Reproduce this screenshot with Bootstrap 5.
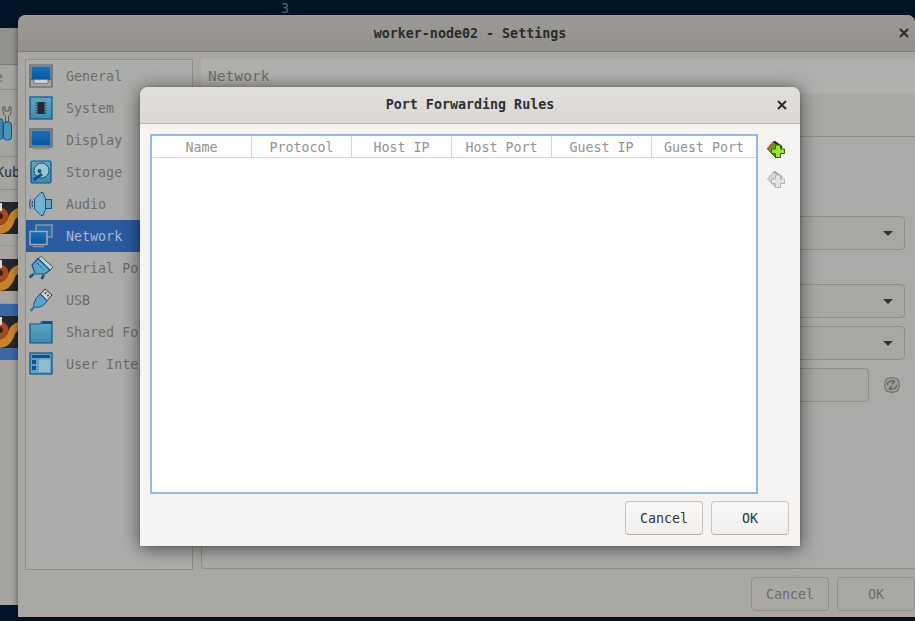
<!DOCTYPE html>
<html lang="en">
<head>
    <meta charset="UTF-8">
    <meta name="viewport" content="width=device-width, initial-scale=1">
    <title>Port Forwarding Rules</title>

    <link href="https://cdn.jsdelivr.net/npm/bootstrap@5.3.2/dist/css/bootstrap.min.css" rel="stylesheet">

    <style>
        html, body {
            height: 100%;
            margin: 0;
            overflow: hidden;
        }
        body {
            background-color: #011426;
            font-family: "DejaVu Sans Mono", "Liberation Mono", monospace;
            font-size: 13.33px;
            line-height: 16px;
        }
        .desk-num {
            position: absolute;
            left: 281px;
            top: 1px;
            color: #56687a;
        }

        /* window behind on the left */
        .back-win {
            position: absolute;
            left: 0;
            top: 28px;
            width: 18px;
            height: 577px;
            background-color: #a5a4a1;
            overflow: hidden;
            color: #2b2b2b;
        }
        .back-head { height: 37px; background-color: #94928e; border-bottom: 1px solid #7d7b77; }
        .back-menu { height: 25px; border-bottom: 1px solid #8d8b87; color: #666; padding-top: 5px; text-indent: -5px; }
        .back-tools { height: 67px; border-bottom: 1px solid #8d8b87; }
        .back-kub { height: 33px; border-bottom: 1px solid #8d8b87; padding-top: 8px; text-indent: -4px; white-space: nowrap; }
        .back-row { height: 56px; border-bottom: 1px solid #999794; }
        .back-row.is-tall { height: 58px; }
        .back-row.is-current { background-color: #3a66a5; border-bottom: 0; }

        /* dimmed settings window */
        .settings-win {
            position: absolute;
            left: 18px;
            top: 15px;
            width: 897px;
            height: 602px;
            background-color: #a9a8a5;
            border-radius: 8px 8px 0 0;
            box-shadow: 0 0 6px rgba(0, 0, 0, .55);
            color: #6c6c6b;
        }
        .settings-head {
            height: 37px;
            padding: 2px 0 0 7px;
            background: linear-gradient(#9c9a96, #94918d);
            border-bottom: 1px solid #7f7c78;
            border-radius: 8px 8px 0 0;
            color: #2a2b2c;
            font-weight: 700;
        }
        .win-x {
            position: absolute;
            right: 4px;
            top: 11px;
            width: 14px;
            height: 14px;
        }
        .settings-body {
            padding: 7px 0 0 7px;
            gap: 8px;
        }
        .side-list {
            width: 168px;
            height: 511px;
            border: 1px solid #8f8e8a;
            background-color: #acacab;
            flex: none;
        }
        .side-item {
            height: 32px;
            gap: 13px;
            padding-left: 3px;
            white-space: nowrap;
            overflow: hidden;
        }
        .side-item svg { flex: none; width: 24px; height: 24px; }
        .side-item span { padding-top: 2px; }
        .side-item.is-current { background-color: #2a5b9f; color: #a9b9d2; }
        .side-main { flex: 1; min-width: 0; }
        .page-title {
            height: 35px;
            background-color: #afafae;
            padding: 9px 0 0 7px;
            font-size: 14.6px;
        }
        .page-panel {
            margin-top: 42px;
            height: 433px;
            border: 1px solid #8f8e8a;
            border-right: 0;
            border-radius: 4px 0 0 4px;
            background-color: #aaa9a7;
            padding: 79px 10px 0 0;
        }
        .fake-select, .fake-input {
            height: 34px;
            border: 1px solid #908e89;
            border-radius: 4px;
            background-color: #a8a7a3;
            margin-left: 330px;
        }
        .fake-select { position: relative; }
        .fake-select::after {
            content: "";
            position: absolute;
            right: 11px;
            top: 14px;
            border-left: 5px solid transparent;
            border-right: 5px solid transparent;
            border-top: 5px solid #333;
        }
        .gap-big { margin-top: 34px; }
        .gap-small { margin-top: 8px; }
        .fake-input { margin-right: 36px; }
        .refresh-row { position: relative; }
        .refresh-row svg { position: absolute; right: 4px; top: 8px; }
        .settings-foot {
            padding: 8px 0 0 0;
            gap: 8px;
        }
        .dim-btn, .dlg-btn {
            width: 78px;
            height: 34px;
            padding: 2px 0 0;
            font: inherit;
            border-radius: 4px;
        }
        .dim-btn {
            border: 1px solid #918f8b;
            background-color: #a9a8a5;
            color: #6c6c6b;
        }

        /* modal on top */
        .rules-dlg {
            position: absolute;
            left: 140px;
            top: 87px;
            width: 660px;
            height: 459px;
            background-color: #f5f4f2;
            border-radius: 8px 8px 0 0;
            box-shadow: 0 2px 18px rgba(0, 0, 0, .6), 0 0 1px rgba(0, 0, 0, .8);
            color: #2e3436;
        }
        .rules-dlg > .win-x { right: 11px; }
        .dlg-head {
            height: 37px;
            background: linear-gradient(#e1dedb, #dcd9d5);
            border-bottom: 1px solid #bdb8b1;
            border-radius: 8px 8px 0 0;
            font-weight: 700;
            color: #2e3132;
        }
        .dlg-body { padding: 10px 0 0 10px; }
        .rules-box {
            width: 608px;
            height: 360px;
            border: 2px solid #8fbbea;
            background-color: #fff;
            flex: none;
        }
        .rules-tbl {
            width: 100%;
            table-layout: fixed;
            margin: 0;
            border-collapse: separate;
            border-spacing: 0;
        }
        .rules-tbl th {
            height: 22px;
            padding: 2px 0 0;
            font-weight: 400;
            text-align: center;
            color: #929292;
            border: 0;
            border-right: 1px solid #d5d5d4;
            border-bottom: 1px solid #d5d5d4;
            vertical-align: middle;
        }
        .rules-tbl th:last-child { border-right: 0; }
        .tool-col {
            width: 36px;
            padding: 7px 0 0 9px;
            gap: 12px;
        }
        .dlg-foot {
            padding: 7px 11px 0 0;
            gap: 8px;
        }
        .dlg-btn {
            border: 1px solid #c9c5bf;
            border-bottom-color: #b3aea6;
            background: linear-gradient(#f8f7f6, #f2f1ef);
            color: #2e3436;
        }
    </style>
</head>
<body>

<div class="desk-num">3</div>

<!-- window behind -->
<div class="back-win">
    <svg width="0" height="0" class="d-block">
        <defs>
            <g id="vm-thumb">
                <rect width="18" height="32" fill="#24262c"/>
                <path d="M0 23 Q6 22 8 16 Q11 8 18 6 V15 Q15 16 14 21 Q10 31 0 32 Z" fill="#c4822c"/>
                <circle cx="0" cy="14" r="8.500" fill="#a8481a"/>
                <circle cx="0" cy="14" r="3" fill="#3a1f14"/>
                <rect x="0" y="1" width="2" height="8" fill="#d8d8d8"/>
            </g>
        </defs>
    </svg>
    <div class="back-head"></div>
    <div class="back-menu">e</div>
    <div class="back-tools d-flex align-items-center">
        <svg width="18" height="36" viewBox="0 0 18 36">
            <rect x="-4" y="14" width="7" height="20" rx="2" fill="#3f86a8" stroke="#17508a"/>
            <path d="M3 2 v5 q0 3 2.500 4 v6 h3 v-6 q2.500 -1 2.500 -4 v-5 l-2 0 v4 h-4 v-4 Z" fill="#a5a4a1" stroke="#555"/>
            <rect x="3.500" y="17" width="8" height="18" rx="3" fill="#4a93b5" stroke="#17508a"/>
        </svg>
    </div>
    <div class="back-kub">Kub</div>
    <div class="back-row d-flex align-items-center">
        <svg width="18" height="32" viewBox="0 0 18 32"><use href="#vm-thumb"/></svg>
    </div>
    <div class="back-row is-tall d-flex align-items-center">
        <svg width="18" height="32" viewBox="0 0 18 32"><use href="#vm-thumb"/></svg>
    </div>
    <div class="back-row is-current d-flex align-items-center">
        <svg width="18" height="32" viewBox="0 0 18 32"><use href="#vm-thumb"/></svg>
    </div>
</div>

<!-- settings window -->
<div class="settings-win d-flex flex-column">
    <div class="settings-head d-flex align-items-center justify-content-center">worker-node02 - Settings</div>
    <svg class="win-x" viewBox="0 0 14 14"><path d="M3 3 L11 11 M11 3 L3 11" stroke="#2b2c2d" stroke-width="2"/></svg>

    <div class="settings-body d-flex">
        <div class="side-list">
            <svg width="0" height="0" class="d-block">
                <defs>
                    <linearGradient id="scr" x1="0" y1="0" x2="0" y2="1"><stop offset="0" stop-color="#1c6fb0"/><stop offset="1" stop-color="#0659a3"/></linearGradient>
                    <linearGradient id="tl" x1="0" y1="0" x2="0" y2="1"><stop offset="0" stop-color="#5fa8c2"/><stop offset="1" stop-color="#3f8bae"/></linearGradient>
                </defs>
            </svg>
            <div class="side-item d-flex align-items-center">
                <svg viewBox="0 0 24 24"><path d="M1 1 H23 V23 H1 Z" fill="#a5a5a3" stroke="#5a5a5a" stroke-width="1.200"/><rect x="2.500" y="2.500" width="19" height="13" fill="url(#scr)"/><path d="M1.500 15.500 H5 V19 H19 V15.500 H22.500" fill="none" stroke="#5a5a5a"/><rect x="5.500" y="16" width="13" height="3" fill="#cfcfcd"/></svg>
                <span>General</span>
            </div>
            <div class="side-item d-flex align-items-center">
                <svg viewBox="0 0 24 24"><rect x="1" y="1" width="22" height="22" fill="url(#tl)" stroke="#14508e" stroke-width="1.200"/><path d="M6.500 7h11M6.500 9.500h11M6.500 12h11M6.500 14.500h11M6.500 17h11" stroke="#274b5e" stroke-width=".8"/><rect x="8.500" y="6" width="7" height="12" fill="#26292d"/></svg>
                <span>System</span>
            </div>
            <div class="side-item d-flex align-items-center">
                <svg viewBox="0 0 24 24"><rect x="1" y="1" width="22" height="18" fill="#a5a5a3" stroke="#5a5a5a" stroke-width="1.200"/><rect x="2.500" y="2.500" width="19" height="15" fill="url(#scr)"/><path d="M4 20.500h16" stroke="#8f8f8d" stroke-width="2"/></svg>
                <span>Display</span>
            </div>
            <div class="side-item d-flex align-items-center">
                <svg viewBox="0 0 24 24"><rect x="2" y="1" width="20" height="22" rx="1.500" fill="url(#tl)" stroke="#14508e" stroke-width="1.200"/><circle cx="12.500" cy="10.500" r="7.500" fill="#9cc4d0" stroke="#1d4f7a"/><circle cx="10.500" cy="11" r="2" fill="#1d4f7a"/><path d="M4.500 20 L13 14" stroke="#14508e" stroke-width="3"/></svg>
                <span>Storage</span>
            </div>
            <div class="side-item d-flex align-items-center">
                <svg viewBox="0 0 24 24"><path d="M3.500 9 Q2.500 12 3.500 15 M1.500 7 Q-.5 12 1.500 17" fill="none" stroke="#14508e"/><path d="M5.500 7 L12 .5 H14 L17 8 V16 L14 23.500 H12 L5.500 17 Z" fill="#74b3cb" stroke="#14508e"/><rect x="16.500" y="7.500" width="6" height="9" fill="#63a7c4" stroke="#14508e"/></svg>
                <span>Audio</span>
            </div>
            <div class="side-item is-current d-flex align-items-center">
                <svg viewBox="0 0 24 24"><rect x="7" y="1" width="16" height="12" fill="#2a6ca6" stroke="#8e98a5" stroke-width="1.400"/><path d="M18 13 v4 h-2" stroke="#8e98a5" fill="none"/><rect x="1" y="7.500" width="17" height="13" fill="url(#scr)" stroke="#a2acb8" stroke-width="1.400"/><path d="M4 22.500h11" stroke="#8e98a5" stroke-width="1.400"/></svg>
                <span>Network</span>
            </div>
            <div class="side-item d-flex align-items-center">
                <svg viewBox="0 0 24 24"><path d="M12 .5 L24 11 L21 14 L9 2.500 Z" fill="#d0d0ce" stroke="#555"/><path d="M9 2.500 L21 14 L16 18 L6 18 L3 9 Z" fill="#5aa4c4" stroke="#14508e" stroke-width="1.200"/><path d="M4.500 18 L.5 21.500 M15 19 L12.500 23" stroke="#14508e" stroke-width="2.500"/><path d="M8 7 l2 2 M11 10 l2 2 M14 13 l1 1" stroke="#14508e"/></svg>
                <span>Serial Ports</span>
            </div>
            <div class="side-item d-flex align-items-center">
                <svg viewBox="0 0 24 24"><path d="M16 1 L23 7 L18 12.500 L11.500 6 Z" fill="#d0d0ce" stroke="#333"/><circle cx="16.500" cy="5" r=".9" fill="#333"/><circle cx="19" cy="7.500" r=".9" fill="#333"/><path d="M11 6 L18 13 Q15 19 7 19.500 L4.500 17 Q6 10 11 6 Z" fill="#5aa4c4" stroke="#14508e"/><path d="M5.500 18.500 L1.500 23" stroke="#2a7fb0" stroke-width="2.500"/></svg>
                <span>USB</span>
            </div>
            <div class="side-item d-flex align-items-center">
                <svg viewBox="0 0 24 24"><path d="M1 4 H11 L13 1.500 H23 V23 H1 Z" fill="url(#tl)" stroke="#14508e" stroke-width="1.200"/><path d="M12 4 L14 2 H23 V4 Z" fill="#14508e"/></svg>
                <span>Shared Folders</span>
            </div>
            <div class="side-item d-flex align-items-center">
                <svg viewBox="0 0 24 24"><rect x="1" y="1" width="22" height="21" fill="#5aa4c4" stroke="#14508e" stroke-width="1.200"/><rect x="3" y="3" width="18" height="3" fill="#14508e"/><rect x="10" y="7.500" width="11" height="12.500" fill="#93bccb"/><rect x="3" y="8" width="4" height="4" fill="#14508e"/><rect x="3" y="14" width="4" height="4" fill="#14508e"/></svg>
                <span>User Interface</span>
            </div>
        </div>

        <div class="side-main">
            <div class="page-title">Network</div>
            <div class="page-panel">
                <div class="fake-select"></div>
                <div class="fake-select gap-big"></div>
                <div class="fake-select gap-small"></div>
                <div class="refresh-row gap-small">
                    <div class="fake-input"></div>
                    <svg width="18" height="18" viewBox="0 0 18 18"><path d="M3 3 Q9 0 15 3 Q18 9 15 15 Q9 18 3 15 Q0 9 3 3 Z" fill="#9a9996" stroke="#6f6e6c"/><path d="M4 9 Q5 4 12 5 M14 9 Q13 14 6 13 M12 5 L9 8 M6 13 L9 10" fill="none" stroke="#5f5e5c" stroke-width="1.200"/></svg>
                </div>
            </div>
            <div class="settings-foot d-flex justify-content-end">
                <button type="button" class="dim-btn">Cancel</button>
                <button type="button" class="dim-btn">OK</button>
            </div>
        </div>
    </div>
</div>

<!-- port forwarding dialog -->
<div class="rules-dlg d-flex flex-column">
    <div class="dlg-head d-flex align-items-center justify-content-center">Port Forwarding Rules</div>
    <svg class="win-x" viewBox="0 0 14 14"><path d="M3 3 L11 11 M11 3 L3 11" stroke="#2b2c2d" stroke-width="2"/></svg>

    <div class="dlg-body d-flex">
        <div class="rules-box">
            <table class="rules-tbl">
                <thead>
                    <tr>
                        <th style="width: 100px">Name</th>
                        <th style="width: 100px">Protocol</th>
                        <th style="width: 100px">Host IP</th>
                        <th style="width: 100px">Host Port</th>
                        <th style="width: 100px">Guest IP</th>
                        <th>Guest Port</th>
                    </tr>
                </thead>
            </table>
        </div>
        <div class="tool-col d-flex flex-column">
            <svg width="18" height="18" viewBox="0 0 18 18">
                <path d="M.5 8 L7 .5 L15 6 L9 17 Z" fill="#5f9c1c" stroke="#2f5f08"/>
                <path d="M.5 8 L7 .5" stroke="#d9501e" stroke-width="1.600"/>
                <path d="M7 .5 L15 6" stroke="#222" stroke-width="2"/>
                <path d="M8.500 4 h5 v4 h4 v4.500 h-4 v4 h-5 v-4 h-4 v-4.500 h4 Z" fill="#9be036" stroke="#2c6a06"/>
            </svg>
            <svg width="18" height="18" viewBox="0 0 18 18">
                <path d="M.5 8 L7 .5 L15 6 L9 17 Z" fill="#d6d6d5" stroke="#b5b5b4"/>
                <path d="M7 .5 L15 6" stroke="#9b9b9a" stroke-width="1.600"/>
                <path d="M8.500 4 h5 v4 h4 v4.500 h-4 v4 h-5 v-4 h-4 v-4.500 h4 Z" fill="#e6e6e5" stroke="#b5b5b4"/>
            </svg>
        </div>
    </div>

    <div class="dlg-foot d-flex justify-content-end">
        <button type="button" class="dlg-btn">Cancel</button>
        <button type="button" class="dlg-btn">OK</button>
    </div>
</div>

<script src="https://cdn.jsdelivr.net/npm/bootstrap@5.3.2/dist/js/bootstrap.bundle.min.js"></script>
</body>
</html>
